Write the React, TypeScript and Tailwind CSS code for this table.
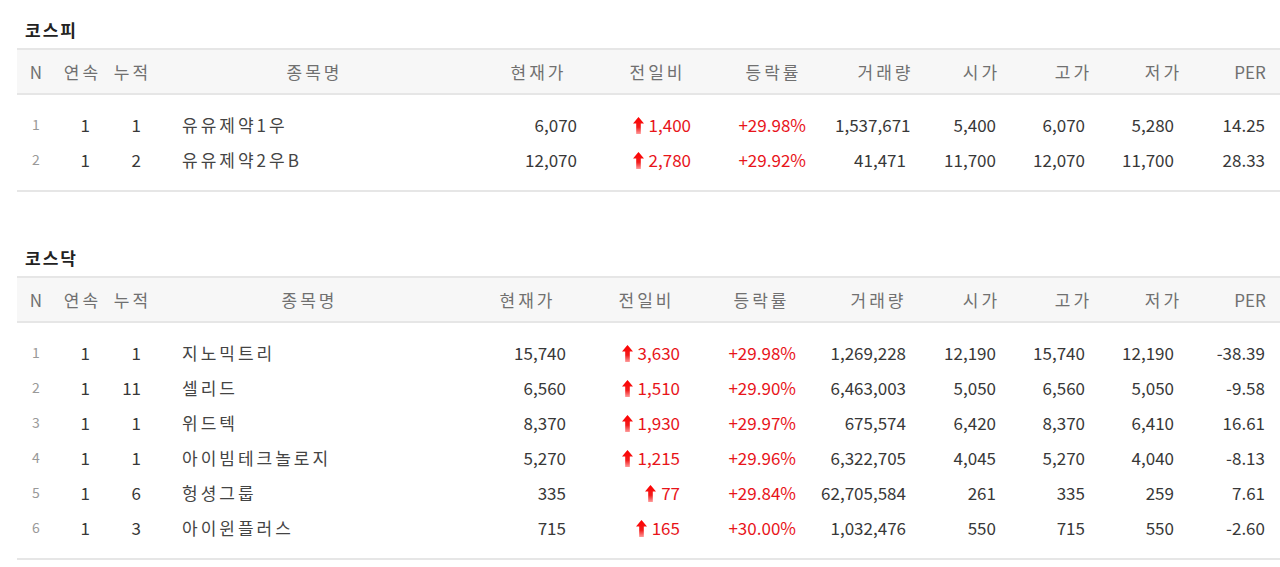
type Row = {
  n: number;
  streak: number;
  total: number;
  name: string;
  price: string;
  diff: string;
  rate: string;
  volume: string;
  open: string;
  high: string;
  low: string;
  per: string;
};

type Cols = {
  widths: string[];
  pads: string[];
};

const kospi: Row[] = [
  { n: 1, streak: 1, total: 1, name: '유유제약1우', price: '6,070', diff: '1,400', rate: '+29.98%', volume: '1,537,671', open: '5,400', high: '6,070', low: '5,280', per: '14.25' },
  { n: 2, streak: 1, total: 2, name: '유유제약2우B', price: '12,070', diff: '2,780', rate: '+29.92%', volume: '41,471', open: '11,700', high: '12,070', low: '11,700', per: '28.33' },
];

const kosdaq: Row[] = [
  { n: 1, streak: 1, total: 1, name: '지노믹트리', price: '15,740', diff: '3,630', rate: '+29.98%', volume: '1,269,228', open: '12,190', high: '15,740', low: '12,190', per: '-38.39' },
  { n: 2, streak: 1, total: 11, name: '셀리드', price: '6,560', diff: '1,510', rate: '+29.90%', volume: '6,463,003', open: '5,050', high: '6,560', low: '5,050', per: '-9.58' },
  { n: 3, streak: 1, total: 1, name: '위드텍', price: '8,370', diff: '1,930', rate: '+29.97%', volume: '675,574', open: '6,420', high: '8,370', low: '6,410', per: '16.61' },
  { n: 4, streak: 1, total: 1, name: '아이빔테크놀로지', price: '5,270', diff: '1,215', rate: '+29.96%', volume: '6,322,705', open: '4,045', high: '5,270', low: '4,040', per: '-8.13' },
  { n: 5, streak: 1, total: 6, name: '헝셩그룹', price: '335', diff: '77', rate: '+29.84%', volume: '62,705,584', open: '261', high: '335', low: '259', per: '7.61' },
  { n: 6, streak: 1, total: 3, name: '아이윈플러스', price: '715', diff: '165', rate: '+30.00%', volume: '1,032,476', open: '550', high: '715', low: '550', per: '-2.60' },
];

// widths: N, 연속, 누적, 종목명, 현재가, 전일비, 등락률, 거래량, 시가, 고가, 저가, PER
// pads: right padding for 현재가 .. PER
const kospiCols: Cols = {
  widths: ['w-[38px]', 'w-[52px]', 'w-[48px]', 'w-[316px]', 'w-[132px]', 'w-[106px]', 'w-[126px]', 'w-[98px]', 'w-[94px]', 'w-[90px]', 'w-[90px]', 'w-[86px]'],
  pads: ['pr-[26px]', 'pr-[18px]', 'pr-[29px]', 'pr-[27px]', 'pr-[31px]', 'pr-[32px]', 'pr-[33px]', 'pr-[28px]'],
};

const kosdaqCols: Cols = {
  widths: ['w-[38px]', 'w-[52px]', 'w-[48px]', 'w-[306px]', 'w-[130px]', 'w-[108px]', 'w-[122px]', 'w-[112px]', 'w-[94px]', 'w-[90px]', 'w-[90px]', 'w-[86px]'],
  pads: ['pr-[25px]', 'pr-[19px]', 'pr-[25px]', 'pr-[27px]', 'pr-[31px]', 'pr-[32px]', 'pr-[33px]', 'pr-[28px]'],
};

const headers = ['N', '연속', '누적', '종목명', '현재가', '전일비', '등락률', '거래량', '시가', '고가', '저가', 'PER'];

const UpArrow = () => (
  <svg width="11" height="17" viewBox="0 0 11 17" className="inline-block mr-[5px] -mt-[3px] align-middle">
    <defs>
      <linearGradient id="upg" x1="0" y1="0" x2="0" y2="1">
        <stop offset="0" stopColor="#ff0000" />
        <stop offset="0.6" stopColor="#f21b1b" />
        <stop offset="1" stopColor="#ff9a9a" />
      </linearGradient>
    </defs>
    <path d="M5.5 0 L11 6.5 L7.8 6.5 L7.8 17 L3.2 17 L3.2 6.5 L0 6.5 Z" fill="url(#upg)" />
  </svg>
);

const StockTable = ({ title, rows, cols, gap }: { title: string; rows: Row[]; cols: Cols; gap: string }) => {
  return (
    <section className={gap}>
      <h2 className="pl-2 h-6 leading-6 mb-[6px] text-[17px] font-bold tracking-[2px] text-[#222]">{title}</h2>
      <table className="table-fixed border-collapse w-[1276px]">
        <colgroup>
          {cols.widths.map((w, i) => (
            <col key={i} className={w} />
          ))}
        </colgroup>
        <thead>
          <tr className="h-[45px] bg-[#f7f7f7] border-y-2 border-[#e6e6e6]">
            {headers.map((h) => (
              <th
                key={h}
                className={`p-0 font-normal text-center text-[#707070] text-[17px] ${h === 'N' || h === 'PER' ? '' : 'tracking-[3px] indent-[3px]'}`}
              >
                {h}
              </th>
            ))}
          </tr>
        </thead>
        <tbody className="border-b-2 border-[#e6e6e6]">
          <tr className="h-[13px]">
            <td colSpan={12} />
          </tr>
          {rows.map((r) => (
            <tr key={r.n} className="h-[35px] text-[17px] text-[#383838]">
              <td className="text-center text-[14px] text-[#999]">{r.n}</td>
              <td className="text-right pr-[17px]">{r.streak}</td>
              <td className="text-right pr-[14px]">{r.total}</td>
              <td className="pl-[27px] tracking-[3px] text-[#444]">{r.name}</td>
              <td className={`text-right ${cols.pads[0]}`}>{r.price}</td>
              <td className={`text-right text-[#e8141a] ${cols.pads[1]}`}>
                <UpArrow />
                {r.diff}
              </td>
              <td className={`text-right text-[#e8141a] ${cols.pads[2]}`}>{r.rate}</td>
              <td className={`text-right ${cols.pads[3]}`}>{r.volume}</td>
              <td className={`text-right ${cols.pads[4]}`}>{r.open}</td>
              <td className={`text-right ${cols.pads[5]}`}>{r.high}</td>
              <td className={`text-right ${cols.pads[6]}`}>{r.low}</td>
              <td className={`text-right ${cols.pads[7]}`}>{r.per}</td>
            </tr>
          ))}
          <tr className="h-[14px]">
            <td colSpan={12} />
          </tr>
        </tbody>
      </table>
    </section>
  );
};

export default function App() {
  return (
    <div className="w-[1280px] h-[567px] overflow-hidden bg-white pl-[17px] pt-[18px] font-['Noto_Sans_CJK_KR','Noto_Sans',sans-serif]">
      <StockTable title="코스피" rows={kospi} cols={kospiCols} gap="" />
      <StockTable title="코스닥" rows={kosdaq} cols={kosdaqCols} gap="mt-[54px]" />
    </div>
  );
}
